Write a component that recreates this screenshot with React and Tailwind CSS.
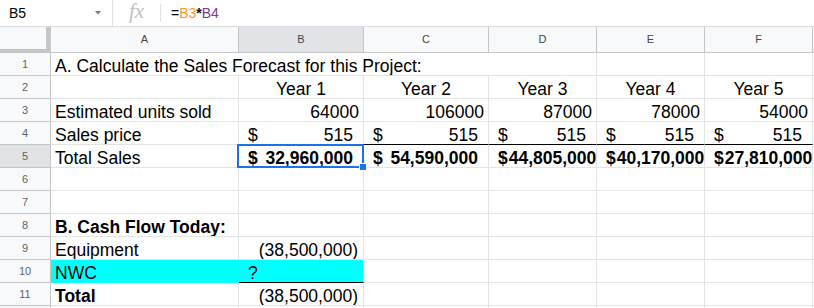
import React from "react";

const cellFont = { fontFamily: '"Liberation Sans", Arial, sans-serif' };

function Cell({ children, className = "", clip = true }) {
  return (
    <div
      className={`relative h-[23px] border-b border-r border-[#e2e3e3] flex items-end whitespace-nowrap text-[17.5px] leading-[18px] text-black ${clip ? "overflow-hidden" : "overflow-visible z-10"} ${className}`}
    >
      {children}
    </div>
  );
}

function RowHead({ n, active }) {
  return (
    <div
      className={`h-[23px] border-b border-r border-[#c4c7c5] flex items-center justify-center text-[11px] text-[#5f6368] ${active ? "bg-[#e1e3e6]" : "bg-[#f8f9fa]"}`}
    >
      {n}
    </div>
  );
}

function Acct({ sign = "$", value, bold, className = "" }) {
  return (
    <div className={`flex w-full justify-between pl-[9px] pr-[10px] ${bold ? "font-bold" : ""} ${className}`}>
      <span>{sign}</span>
      <span>{value}</span>
    </div>
  );
}

export default function App() {
  const cols = ["A", "B", "C", "D", "E", "F"];
  const years = ["Year 1", "Year 2", "Year 3", "Year 4", "Year 5"];
  const units = ["64000", "106000", "87000", "78000", "54000"];
  const totals = ["32,960,000", "54,590,000", "44,805,000", "40,170,000", "27,810,000"];

  return (
    <div className="w-[814px] h-[308px] overflow-hidden bg-white" style={cellFont}>
      {/* formula bar */}
      <div className="h-[27px] border-b border-[#dadce0] flex items-center">
        <div className="w-[113px] h-full flex items-center pl-[9px] pr-[10px] justify-between border-r border-[#e0e0e0]">
          <span className="text-[14px] text-black">B5</span>
          <svg width="6" height="4" viewBox="0 0 6 4" className="mr-[1px]">
            <path d="M0 0 L6 0 L3 3.5 Z" fill="#757575" />
          </svg>
        </div>
        <div className="w-[48px] h-[18px] flex items-center justify-center border-r border-[#e0e0e0]">
          <span
            className="italic text-[21px] leading-none text-[#c0c0c0] -mt-[3px]"
            style={{ fontFamily: '"Liberation Serif", "Times New Roman", serif' }}
          >
            fx
          </span>
        </div>
        <div className="pl-[10px] text-[14px]">
          <span className="text-black">=</span>
          <span className="text-[#f7981d]">B3</span>
          <span className="text-black font-bold">*</span>
          <span className="text-[#7e3794]">B4</span>
        </div>
      </div>

      {/* grid */}
      <div className="grid grid-cols-[51px_188px_125px_125px_108px_108px_108px_1fr]">
        {/* header row */}
        <div className="h-[26px] bg-[#f8f9fa] border-r-[5px] border-b-4 border-[#c4c7c5]" />
        {cols.map((c) => (
          <div
            key={c}
            className={`h-[26px] border-b border-r border-[#c4c7c5] flex items-center justify-center text-[11px] text-[#444746] ${c === "B" ? "bg-[#e1e3e6]" : "bg-[#f8f9fa]"}`}
          >
            {c}
          </div>
        ))}
        <div className="h-[26px] border-b border-[#c4c7c5] bg-[#f8f9fa]" />

        {/* row 1 */}
        <RowHead n={1} />
        <Cell className="col-span-4 pl-[4px]">A. Calculate the Sales Forecast for this Project:</Cell>
        <Cell />
        <Cell />
        <Cell className="border-r-0" />

        {/* row 2 */}
        <RowHead n={2} />
        <Cell />
        {years.map((y) => (
          <Cell key={y} className="justify-center">
            {y}
          </Cell>
        ))}
        <Cell className="border-r-0" />

        {/* row 3 */}
        <RowHead n={3} />
        <Cell className="pl-[4px]">Estimated units sold</Cell>
        {units.map((u) => (
          <Cell key={u} className="justify-end pr-[4px]">
            {u}
          </Cell>
        ))}
        <Cell className="border-r-0" />

        {/* row 4 */}
        <RowHead n={4} />
        <Cell className="pl-[4px]">Sales price</Cell>
        {years.map((y) => (
          <Cell key={y} className="border-b-black">
            <Acct value="515" />
          </Cell>
        ))}
        <Cell className="border-r-0" />

        {/* row 5 */}
        <RowHead n={5} active />
        <Cell className="pl-[4px]">Total Sales</Cell>
        {totals.map((t, i) => (
          <Cell key={t} clip={i !== 0}>
            <Acct value={t} bold className={i >= 2 ? "pr-[4px] gap-[1px]" : ""} />
            {i === 0 && (
              <>
                <div className="absolute -left-[2px] -top-[1px] -right-[1px] -bottom-[1px] border-2 border-[#1a73e8] pointer-events-none" />
                <div className="absolute -right-[4px] -bottom-[4px] w-[8px] h-[8px] bg-[#1a73e8] border border-white" />
              </>
            )}
          </Cell>
        ))}
        <Cell className="border-r-0" />

        {/* row 6, 7 */}
        {[6, 7].map((n) => (
          <React.Fragment key={n}>
            <RowHead n={n} />
            <Cell />
            <Cell />
            <Cell />
            <Cell />
            <Cell />
            <Cell />
            <Cell className="border-r-0" />
          </React.Fragment>
        ))}

        {/* row 8 */}
        <RowHead n={8} />
        <Cell className="pl-[4px] font-bold">B. Cash Flow Today:</Cell>
        <Cell />
        <Cell />
        <Cell />
        <Cell />
        <Cell />
        <Cell className="border-r-0" />

        {/* row 9 */}
        <RowHead n={9} />
        <Cell className="pl-[4px]">Equipment</Cell>
        <Cell className="justify-end pr-[5px]">(38,500,000)</Cell>
        <Cell />
        <Cell />
        <Cell />
        <Cell />
        <Cell className="border-r-0" />

        {/* row 10 */}
        <RowHead n={10} />
        <Cell className="pl-[4px] bg-[#00ffff] border-r-[#00ffff] border-b-[#00ffff]">NWC</Cell>
        <Cell className="pl-[9px] bg-[#00ffff] border-b-black">?</Cell>
        <Cell />
        <Cell />
        <Cell />
        <Cell />
        <Cell className="border-r-0" />

        {/* row 11 */}
        <RowHead n={11} />
        <Cell className="pl-[4px] font-bold">Total</Cell>
        <Cell className="justify-end pr-[5px]">(38,500,000)</Cell>
        <Cell />
        <Cell />
        <Cell />
        <Cell />
        <Cell className="border-r-0" />

        {/* row 12 (partially visible) */}
        <RowHead n="" />
        <Cell />
        <Cell />
        <Cell />
        <Cell />
        <Cell />
        <Cell />
        <Cell className="border-r-0" />
      </div>
    </div>
  );
}
